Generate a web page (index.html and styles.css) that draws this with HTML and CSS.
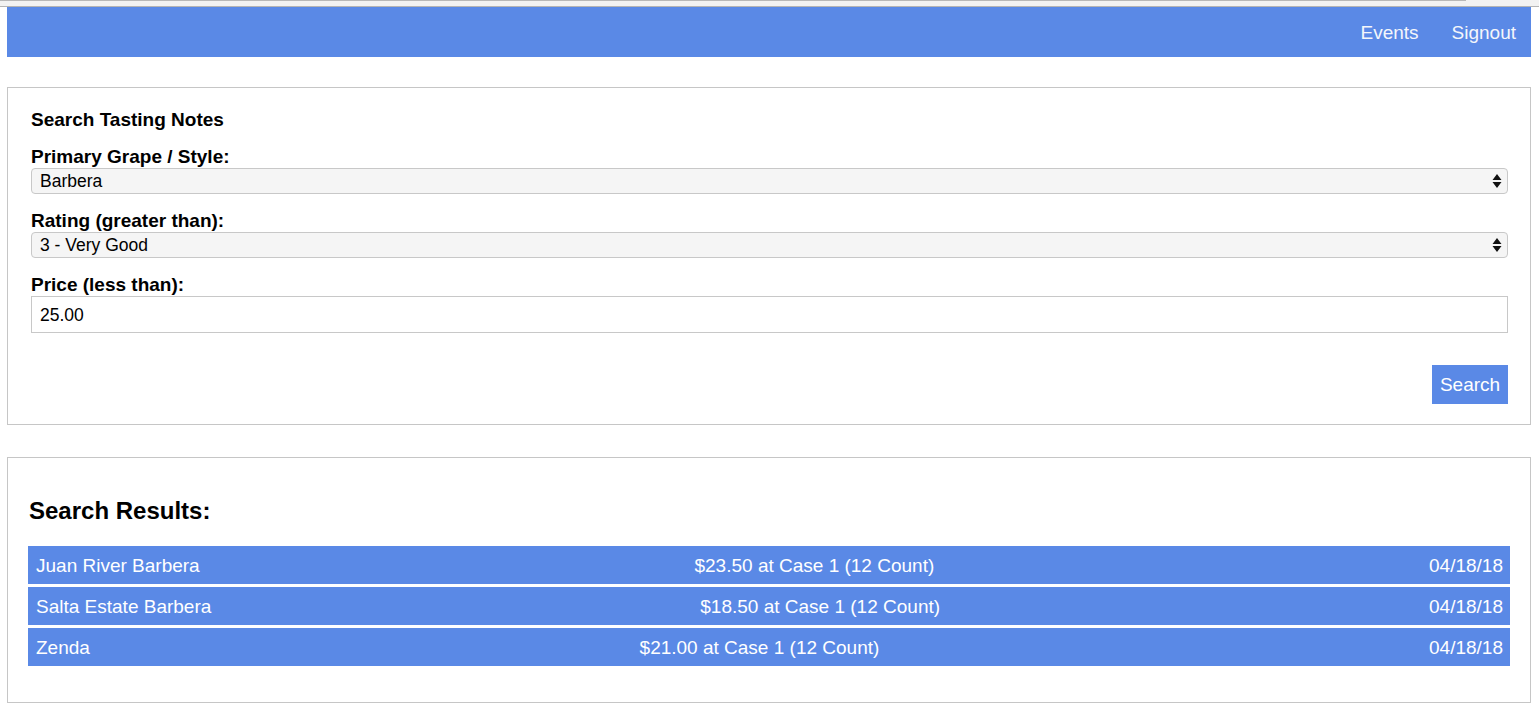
FILE: index.html
```html
<!DOCTYPE html>
<html>
<head>
<meta charset="utf-8">
<title>Search Tasting Notes</title>
<link rel="stylesheet" href="styles.css">
</head>
<body>
<div class="topstrip"><div class="topline"></div></div>
<nav class="navbar">
  <a class="navlink" href="#">Events</a>
  <a class="navlink" href="#">Signout</a>
</nav>
<main class="page">
  <section class="card search-card">
    <h2 class="card-title">Search Tasting Notes</h2>
    <div class="field">
      <label class="field-label">Primary Grape / Style:</label>
      <div class="select">
        <span class="select-value">Barbera</span>
        <svg class="select-arrows" width="10" height="16" viewBox="0 0 10 16"><path d="M5 1 L9.5 7 L0.5 7 Z M5 15 L9.5 9 L0.5 9 Z" fill="#111"/></svg>
      </div>
    </div>
    <div class="field">
      <label class="field-label">Rating (greater than):</label>
      <div class="select">
        <span class="select-value">3 - Very Good</span>
        <svg class="select-arrows" width="10" height="16" viewBox="0 0 10 16"><path d="M5 1 L9.5 7 L0.5 7 Z M5 15 L9.5 9 L0.5 9 Z" fill="#111"/></svg>
      </div>
    </div>
    <div class="field">
      <label class="field-label">Price (less than):</label>
      <div class="text-input">25.00</div>
    </div>
    <div class="actions">
      <button class="btn">Search</button>
    </div>
  </section>
  <section class="card results-card">
    <h2 class="results-title">Search Results:</h2>
    <div class="results">
      <div class="row"><span>Juan River Barbera</span><span>$23.50 at Case 1 (12 Count)</span><span>04/18/18</span></div>
      <div class="row"><span>Salta Estate Barbera</span><span>$18.50 at Case 1 (12 Count)</span><span>04/18/18</span></div>
      <div class="row"><span>Zenda</span><span>$21.00 at Case 1 (12 Count)</span><span>04/18/18</span></div>
    </div>
  </section>
</main>
</body>
</html>
```
FILE: styles.css
```css
html, body {
  margin: 0;
  padding: 0;
  background: #ffffff;
  font-family: "Liberation Sans", Arial, Helvetica, sans-serif;
  color: #000;
}
.topstrip {
  background: #f2f2f2;
  border-bottom: 1px solid #b4b4b4;
  box-sizing: border-box;
  height: 7px;
}
.topline {
  width: 1466px;
  height: 1px;
  background: #b8b8b8;
}
.navbar {
  margin: 0 8px 0 7px;
  height: 50px;
  background: #5a89e6;
  display: flex;
  justify-content: flex-end;
  align-items: center;
  gap: 33px;
  padding-right: 15px;
}
.navlink {
  color: #f4f6fb;
  text-decoration: none;
  font-size: 19px;
  line-height: 22px;
  margin-top: 1px;
}
.page {
  margin: 30px 8px 0 7px;
  display: flex;
  flex-direction: column;
  gap: 32px;
}
.card {
  border: 1px solid #c6c6c6;
  background: #fff;
}
.search-card {
  padding: 21px 22px 20px 23px;
}
.card-title {
  margin: 0 0 15px 0;
  font-size: 19px;
  line-height: 22px;
  font-weight: bold;
}
.field {
  display: flex;
  flex-direction: column;
  margin-bottom: 16px;
}
.field:last-of-type {
  margin-bottom: 0;
}
.field-label {
  font-size: 19px;
  line-height: 22px;
  font-weight: bold;
}
.select {
  height: 26px;
  box-sizing: border-box;
  border: 1px solid #c8c8c8;
  border-radius: 4px;
  background: #f5f5f5;
  display: flex;
  align-items: center;
  justify-content: space-between;
  padding: 0 5px 0 8px;
}
.select-value {
  font-size: 17.5px;
  line-height: 20px;
}
.select-arrows {
  display: block;
}
.text-input {
  height: 37px;
  box-sizing: border-box;
  border: 1px solid #c8c8c8;
  background: #fff;
  font-size: 17.5px;
  line-height: 20px;
  padding: 8px 8px;
}
.actions {
  display: flex;
  justify-content: flex-end;
  margin-top: 32px;
}
.btn {
  background: #5a89e6;
  color: #fff;
  border: none;
  font-family: "Liberation Sans", Arial, Helvetica, sans-serif;
  font-size: 19px;
  line-height: 22px;
  height: 39px;
  width: 76px;
  padding: 1px 0 0 0;
  margin: 0;
}
.results-card {
  padding: 39px 20px 36px 20px;
}
.results-title {
  margin: 0 0 21px 1px;
  font-size: 24px;
  line-height: 28px;
  font-weight: bold;
}
.results {
  display: flex;
  flex-direction: column;
  gap: 3px;
}
.row {
  height: 38px;
  box-sizing: border-box;
  background: #5a89e6;
  color: #fff;
  display: flex;
  justify-content: space-between;
  align-items: center;
  padding: 2px 7px 0 8px;
  font-size: 19px;
  line-height: 22px;
}
```
